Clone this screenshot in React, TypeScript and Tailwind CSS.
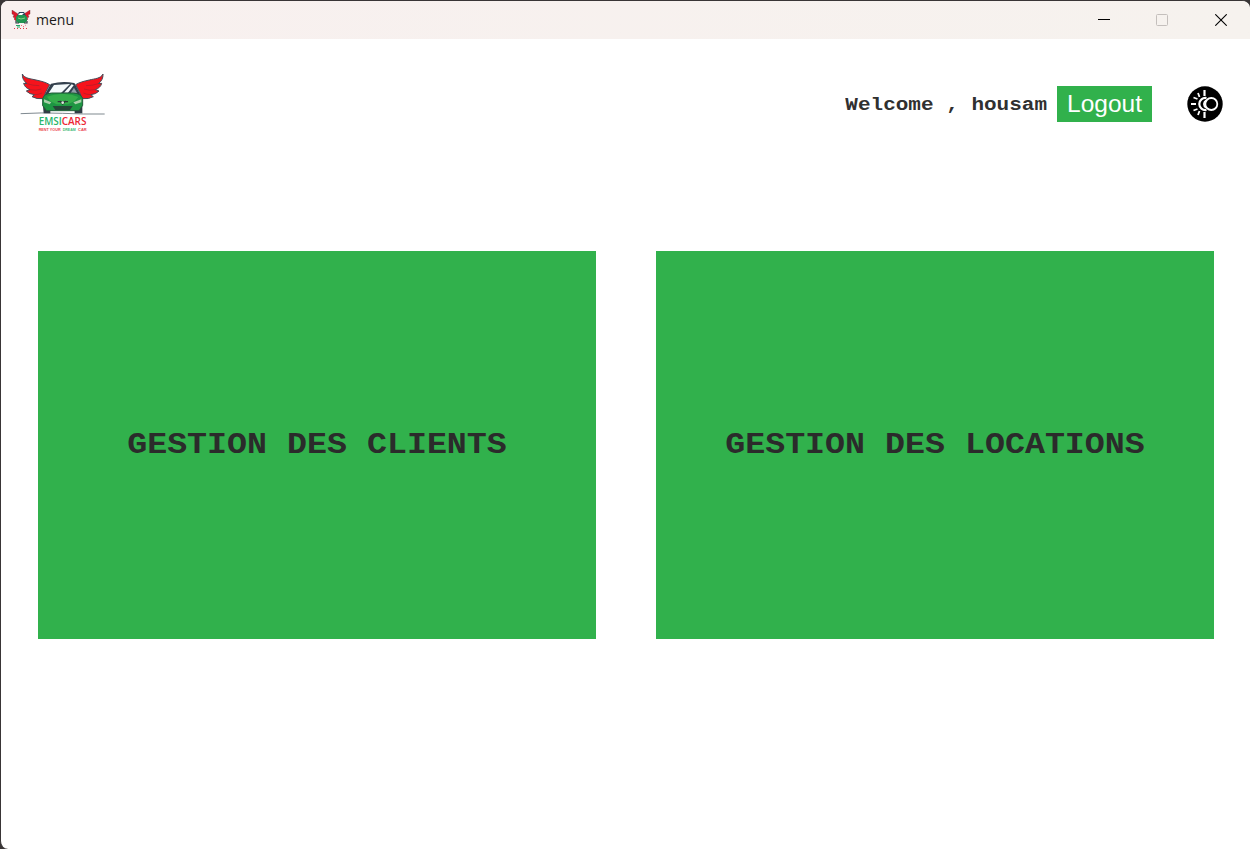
function Wing({ flip = false }: { flip?: boolean }) {
  return (
    <g transform={flip ? "matrix(-1 0 0 1 316 0)" : undefined}>
      <path
        d="M37 27 C44 41 62 41 78 45 C96 49 108 52 119 59 L108 80 L99 101 Q80 103 66 95 L74 89 Q58 88 49 78 L60 74 Q44 68 41 55 L51 56 Q36 45 37 27Z"
        fill="#f5131c"
        stroke="#454b57"
        strokeWidth="3"
        strokeLinejoin="round"
      />
      <path d="M51 56 Q68 62 88 62 M60 74 Q78 78 94 72 M74 89 Q86 89 96 84" fill="none" stroke="#a81f2a" strokeWidth="2" />
    </g>
  );
}

function Logo() {
  return (
    <svg className="mb-1 h-[75px] w-[105px]" viewBox="0 0 315 225" aria-label="EMSICARS">
      <path d="M32 146 Q95 142 158 145 T284 147" fill="none" stroke="#65717a" strokeWidth="2.5" />
      <Wing />
      <Wing flip />
      <path d="M98 115 H121 V145 H101Z M193 115 H217 V145 H194Z" fill="#303b45" />
      <path d="M106 91 L124 58 Q158 49 192 56 L210 91Z" fill="#334250" stroke="#303d49" strokeWidth="4" strokeLinejoin="round" />
      <path d="M116 84 L132 60 L180 57 L153 84Z M162 83 L185 58 L191 61 L174 83Z" fill="#f4fafb" />
      <path d="M192 68 L201 84 H182Z" fill="#8f9ea6" />
      <path d="M98 101 Q102 86 125 84 H190 Q211 85 218 100 L218 121 L207 137 H110 L98 122Z" fill="#1e9643" stroke="#245c3b" strokeWidth="3" />
      <path d="M111 95 Q137 85 158 87 Q184 86 205 96 L194 108 L174 118 H140 L121 109Z" fill="#35ad4b" />
      <path d="M102 103 L124 112 L119 118 L102 112Z M214 103 L190 112 L196 118 L214 112Z" fill="#a9cfaa" />
      <path d="M128 123 H188 L180 135 H136Z" fill="#254738" />
      <path d="M143 110 H174 M149 108 L158 117 L167 108" fill="none" stroke="#263d34" strokeWidth="4" />
      <circle cx="158" cy="113" r="4" fill="#dce9dc" />
      <text x="86" y="179" textLength="143" lengthAdjust="spacingAndGlyphs" fontFamily="Open Sans, sans-serif" fontSize="30" fontWeight="600">
        <tspan fill="#29b66b">EMSI</tspan><tspan fill="#ed2634">CARS</tspan>
      </text>
      <g fontFamily="Liberation Sans, sans-serif" fontSize="12" fontWeight="700">
        <text x="86" y="199" textLength="66" lengthAdjust="spacingAndGlyphs" fill="#ea4650">RENT YOUR</text>
        <text x="158" y="199" textLength="39" lengthAdjust="spacingAndGlyphs" fill="#46b978">DREAM</text>
        <text x="204" y="199" textLength="26" lengthAdjust="spacingAndGlyphs" fill="#ea4650">CAR</text>
      </g>
    </svg>
  );
}

function WindowLogo() {
  return (
    <svg className="h-5 w-5" viewBox="0 0 20 20" aria-hidden="true">
      <path d="M1 0 L7 4 L7 9 L5 11 L3 9 L4 8 L2 7 L3 5 L1 4Z M19 0 L13 4 L13 9 L15 11 L17 9 L16 8 L18 7 L17 5 L19 4Z" fill="#dc1829" stroke="#6a3039" strokeWidth=".4" />
      <path d="M6 6 L8 2 H13 L15 6Z" fill="#29405b" />
      <path d="M7 5 L9 3 H13 L11 5Z" fill="#fff" />
      <path d="M5 7 L7 5 H14 L16 7 V11 L14 13 H7 L5 11Z" fill="#219451" />
      <path d="M5 11 V13 H8 M13 13 H16 V11" stroke="#344148" strokeWidth="1.2" fill="none" />
      <path d="M7 8 L10 9 L14 8" stroke="#83d17f" fill="none" />
      <path d="M5 15.5 H9 M6 17 H9" stroke="#1fa866" strokeWidth="1.2" />
      <path d="M10 16 L12 14 M12 17 L15 15 M3 18.5 H17" stroke="#df3849" strokeWidth="1" strokeDasharray="1 2" />
    </svg>
  );
}

function ThemeIcon() {
  return (
    <svg className="h-9 w-9" viewBox="0 0 36 36" aria-hidden="true">
      <circle cx="18" cy="18" r="17.7" fill="#000" />
      <g fill="none" stroke="#fff" strokeWidth="1.8">
        <path d="M17.5 4V10 M17.5 26V32 M4 18H9" strokeWidth="2.2" />
        <path d="M11 7L12.5 11 M6.5 11.5L10.5 13 M6.5 24.5L10.5 23 M11 29L12.5 25" />
        <path d="M19.5 12A6.1 6.1 0 1 0 19.5 24" strokeWidth="2.2" />
        <path d="M19.2 14.2A4.3 4.3 0 0 0 19.2 21.8" />
        <circle cx="24.3" cy="18" r="6" />
      </g>
    </svg>
  );
}

function Tile({ label }: { label: string }) {
  return (
    <button className="flex h-[388px] w-[558px] items-center justify-center bg-[#31b14c] pt-0.5">
      <span className="scale-y-[.9] font-['Liberation_Mono',monospace] text-[33.3px] font-bold text-[#2b2b2b]">{label}</span>
    </button>
  );
}

export default function App() {
  return (
    <div className="h-[849px] w-[1250px] overflow-hidden bg-[#393536]">
      <div className="flex h-full flex-col overflow-hidden rounded-t-lg rounded-bl-lg border-l border-t border-[#393536] bg-white">
        <header className="flex h-[38px] shrink-0 items-center justify-between bg-linear-to-r from-[#f8f0ef] to-[#f6f2ee] pl-2.5">
          <div className="flex items-center gap-[5px]">
            <WindowLogo />
            <span className="font-['Open_Sans',sans-serif] text-[14px] leading-5 text-[#1b1918]">menu</span>
          </div>
          <div className="flex h-full">
            <button aria-label="Minimize" className="flex w-[58px] items-center justify-center">
              <svg className="h-3 w-3" viewBox="0 0 12 12"><path d="M0 5.5H12" stroke="#000" /></svg>
            </button>
            <button aria-label="Maximize" className="flex w-[58px] items-center justify-center">
              <svg className="h-3 w-3" viewBox="0 0 12 12"><rect x=".5" y=".5" width="11" height="11" rx="1" fill="none" stroke="#c4bfbc" /></svg>
            </button>
            <button aria-label="Close" className="flex w-[59px] items-center justify-center">
              <svg className="h-3 w-3" viewBox="0 0 12 12"><path d="M.3.3L11.7 11.7M11.7.3L.3 11.7" stroke="#000" strokeWidth="1.1" /></svg>
            </button>
          </div>
        </header>
        <div className="flex h-[130px] shrink-0 items-center pl-[9px] pr-[27px]">
          <Logo />
          <div className="ml-auto flex items-center">
            <span className="mr-2.5 scale-y-[.86] whitespace-pre pt-1 font-['Liberation_Mono',monospace] text-[21px] font-bold text-[#303030]">Welcome , housam</span>
            <button className="flex h-9 w-[95px] items-center justify-center bg-[#31b14c] font-['Liberation_Sans',sans-serif] text-[24.5px] text-white">Logout</button>
            <button aria-label="Toggle theme" className="ml-[35px]"><ThemeIcon /></button>
          </div>
        </div>
        <main className="mt-[82px] flex gap-[60px] pl-[37px]">
          <Tile label="GESTION DES CLIENTS" />
          <Tile label="GESTION DES LOCATIONS" />
        </main>
      </div>
    </div>
  );
}
